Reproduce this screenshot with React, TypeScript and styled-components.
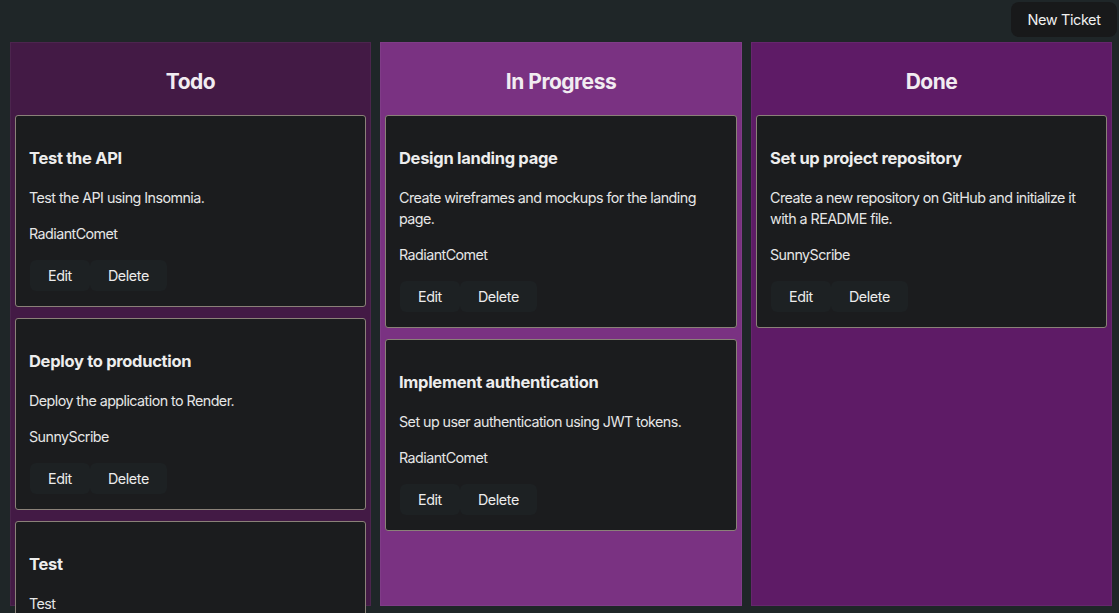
import React from "react";
import styled, { createGlobalStyle } from "styled-components";

const Global = createGlobalStyle`
  html, body { margin: 0; padding: 0; background: #1f2628; }
  body { font-family: Inter, "Noto Sans", sans-serif; color: #ececec; overflow: hidden; }
  * { box-sizing: border-box; }
`;

const Page = styled.div`
  width: 1119px;
  height: 613px;
  overflow: hidden;
`;

const TopBar = styled.header`
  display: flex;
  justify-content: flex-end;
  padding: 2px 2px 5px 0;
  height: 42px;
`;

const NewButton = styled.button`
  height: 35px;
  width: 106px;
  border: none;
  border-radius: 8px;
  background: #18191a;
  color: #f0f0f0;
  font-family: Inter, sans-serif;
  font-size: 14.5px;
  letter-spacing: -0.4px;
  padding: 0;
`;

const Board = styled.main`
  display: grid;
  grid-template-columns: 361px 362px 361px;
  column-gap: 9px;
  padding: 0 7px 0 10px;
`;

const Column = styled.section<{ $bg: string }>`
  background: ${(p) => p.$bg};
  height: 564px;
  padding: 0 5px;
  box-shadow: inset 0 0 0 1px rgba(255, 255, 255, 0.05);
  display: flex;
  flex-direction: column;
  gap: 11px;
`;

const ColumnTitle = styled.h2`
  margin: 26px 0 8px;
  font-size: 21px;
  line-height: 28px;
  font-weight: 700;
  letter-spacing: -0.5px;
  text-align: center;
  color: #f1ecf1;
`;

const Card = styled.article`
  background: #1b1c1e;
  border: 1.5px solid #8a8178;
  border-radius: 3px;
  padding: 0 13px 15px;
  flex-shrink: 0;
`;

const CardTitle = styled.h3`
  margin: 31px 0 0;
  font-size: 16.5px;
  line-height: 22px;
  font-weight: 700;
  letter-spacing: -0.3px;
  color: #ededed;
`;

const Desc = styled.p`
  margin: 18px 0 0;
  font-size: 14.3px;
  line-height: 21px;
  letter-spacing: -0.55px;
  color: #e6e6e6;
`;

const Author = styled(Desc)`
  margin-top: 15px;
`;

const Actions = styled.div`
  display: flex;
  margin-top: 16px;
  margin-left: 1px;
`;

const ActionButton = styled.button`
  height: 31px;
  padding: 0 18px;
  border: none;
  border-radius: 6px;
  background: #1d2123;
  color: #ececec;
  font-family: Inter, sans-serif;
  font-size: 14.3px;
  letter-spacing: -0.4px;
`;

type Ticket = { title: string; desc: string; author: string };

const columns: { name: string; bg: string; tickets: Ticket[] }[] = [
  {
    name: "Todo",
    bg: "#431a45",
    tickets: [
      { title: "Test the API", desc: "Test the API using Insomnia.", author: "RadiantComet" },
      { title: "Deploy to production", desc: "Deploy the application to Render.", author: "SunnyScribe" },
      { title: "Test", desc: "Test", author: "RadiantComet" },
    ],
  },
  {
    name: "In Progress",
    bg: "#7a3282",
    tickets: [
      {
        title: "Design landing page",
        desc: "Create wireframes and mockups for the landing page.",
        author: "RadiantComet",
      },
      {
        title: "Implement authentication",
        desc: "Set up user authentication using JWT tokens.",
        author: "RadiantComet",
      },
    ],
  },
  {
    name: "Done",
    bg: "#5e1b66",
    tickets: [
      {
        title: "Set up project repository",
        desc: "Create a new repository on GitHub and initialize it with a README file.",
        author: "SunnyScribe",
      },
    ],
  },
];

export default function App() {
  return (
    <Page>
      <Global />
      <TopBar>
        <NewButton>New Ticket</NewButton>
      </TopBar>
      <Board>
        {columns.map((c) => (
          <Column key={c.name} $bg={c.bg}>
            <ColumnTitle>{c.name}</ColumnTitle>
            {c.tickets.map((t) => (
              <Card key={t.title}>
                <CardTitle>{t.title}</CardTitle>
                <Desc>{t.desc}</Desc>
                <Author>{t.author}</Author>
                <Actions>
                  <ActionButton>Edit</ActionButton>
                  <ActionButton>Delete</ActionButton>
                </Actions>
              </Card>
            ))}
          </Column>
        ))}
      </Board>
    </Page>
  );
}
